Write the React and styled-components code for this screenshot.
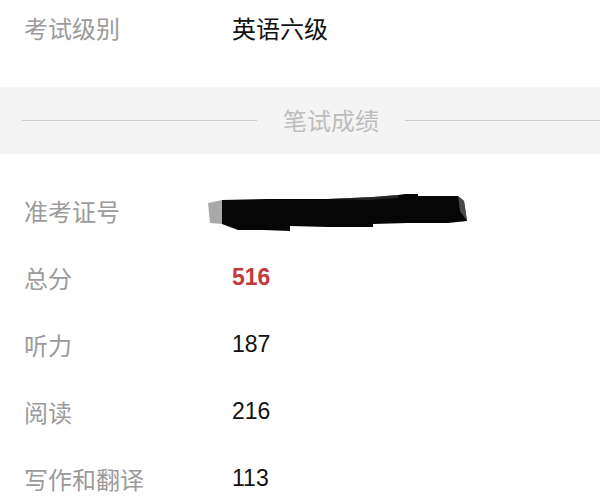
import React from 'react';
import styled, { createGlobalStyle } from 'styled-components';

const GlobalStyle = createGlobalStyle`
  html, body {
    margin: 0;
    padding: 0;
    background: #ffffff;
    overflow: hidden;
  }
  body {
    font-family: "Liberation Sans", "Noto Sans CJK SC", sans-serif;
  }
`;

const Page = styled.div`
  width: 600px;
  height: 501px;
  overflow: hidden;
  background: #ffffff;
  display: flex;
  flex-direction: column;
`;

const Row = styled.div`
  display: flex;
  align-items: center;
  height: ${props => props.h || 67}px;
  padding-left: 24px;
  flex-shrink: 0;
`;

const Label = styled.div`
  width: 208px;
  font-size: 24px;
  color: #9b9b9b;
  flex-shrink: 0;
`;

const Value = styled.div`
  font-size: 24px;
  color: #111111;
`;

const Score = styled.div`
  font-size: 23px;
  color: ${props => props.highlight ? '#c23a3c' : '#111111'};
  font-weight: ${props => props.highlight ? 700 : 400};
`;

const Spacer = styled.div`
  height: ${props => props.h}px;
  flex-shrink: 0;
`;

const SectionBand = styled.div`
  height: 67px;
  background: #f4f4f4;
  display: flex;
  align-items: center;
  padding-left: 22px;
  flex-shrink: 0;
`;

const BandLine = styled.div`
  height: 1px;
  background: #cccccc;
  ${props => props.w ? `width: ${props.w}px; flex-shrink: 0;` : 'flex: 1;'}
`;

const BandTitle = styled.div`
  font-size: 24px;
  color: #bdbdbd;
  padding: 0 26px;
  margin-top: -3px;
`;

const Scribble = styled.svg`
  margin-left: -24px;
  margin-top: 7px;
  display: block;
`;

const Redacted = () => (
  <Scribble width="262" height="42" viewBox="0 0 262 42">
    <polygon points="0,10 14,7 14,31 2,30" fill="#9a9a9a" opacity="0.85" />
    <polygon
      points="14,7 60,6 120,6 165,4 190,2 197,1 210,1 210,3 250,3 256,8 259,28 240,30 200,30 165,31 165,34 120,34 82,33 82,38 55,37 30,37 22,34 14,31"
      fill="#060606"
    />
    <polygon points="250,3 256,8 259,28 252,18" fill="#5a5a5a" opacity="0.8" />
    <polygon points="120,6 165,4 190,2 190,5 160,7" fill="#3a3a3a" opacity="0.6" />
  </Scribble>
);

const rows = [
  { label: '总分', value: '516', highlight: true },
  { label: '听力', value: '187' },
  { label: '阅读', value: '216' },
  { label: '写作和翻译', value: '113' },
];

const App = () => (
  <>
    <GlobalStyle />
    <Page>
      <Row h={54}>
        <Label>考试级别</Label>
        <Value>英语六级</Value>
      </Row>
      <Spacer h={33} />
      <SectionBand>
        <BandLine w={235} />
        <BandTitle>笔试成绩</BandTitle>
        <BandLine />
      </SectionBand>
      <Spacer h={23} />
      <Row>
        <Label>准考证号</Label>
        <Redacted />
      </Row>
      {rows.map(r => (
        <Row key={r.label}>
          <Label>{r.label}</Label>
          <Score highlight={r.highlight}>{r.value}</Score>
        </Row>
      ))}
    </Page>
  </>
);

export default App;
